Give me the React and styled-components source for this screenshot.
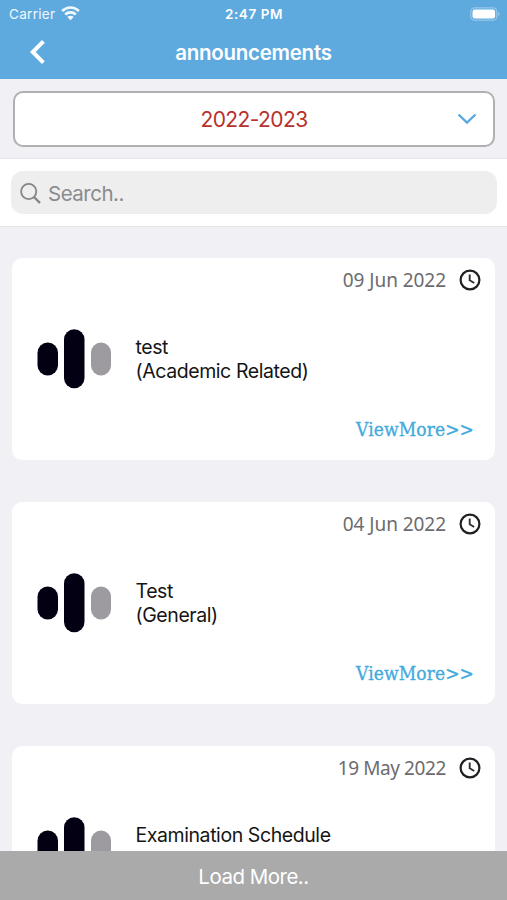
import styled, { createGlobalStyle } from "styled-components";

const colors = {
  blue: "#5eaadf",
  page: "#f0f0f5",
  link: "#42aadd",
  red: "#b7312d",
  ink: "#030014",
  gray: "#9d9b9f",
};

const GlobalStyle = createGlobalStyle`
  * {
    box-sizing: border-box;
  }

  body {
    margin: 0;
    background-color: ${colors.page};
    font-family: Inter, "Liberation Sans", sans-serif;
  }

  button {
    border: none;
    padding: 0;
    background: none;
    font-family: inherit;
  }

  svg {
    display: block;
  }
`;

const Screen = styled.div`
  display: flex;
  flex-direction: column;
  width: 507px;
  height: 900px;
  overflow: hidden;
  background-color: ${colors.page};
`;

const Header = styled.header`
  flex: none;
  height: 79px;
  background-color: ${colors.blue};
  color: white;
`;

const StatusBar = styled.div`
  display: grid;
  grid-template-columns: 1fr auto 1fr;
  align-items: center;
  height: 27px;
  padding: 0 7px 0 9px;
  font-size: 13px;
`;

const Carrier = styled.div`
  display: flex;
  align-items: center;
  gap: 6px;
  opacity: 0.92;
  font-size: 13.5px;
  letter-spacing: 0.3px;
`;

const Time = styled.div`
  font-size: 13.5px;
  font-weight: 600;
  letter-spacing: 0.6px;
  margin-right: 1px;
`;

const BatteryBox = styled.div`
  justify-self: end;
`;

const NavBar = styled.div`
  display: grid;
  grid-template-columns: 60px 1fr 60px;
  align-items: center;
  height: 50px;
`;

const BackBtn = styled.button`
  padding-left: 28px;
  color: white;
`;

const Title = styled.h1`
  margin: 0;
  padding-top: 1px;
  text-align: center;
  font-size: 20.5px;
  font-weight: 600;
  letter-spacing: -0.28px;
`;

const YearBox = styled.div`
  flex: none;
  height: 80px;
  padding: 12px 12px 0 13px;
  border-bottom: 1px solid #e5e5e9;
`;

const YearSelect = styled.button`
  display: grid;
  grid-template-columns: 36px 1fr 36px;
  align-items: center;
  width: 100%;
  height: 56px;
  border: 2px solid #b0b0b2;
  border-radius: 10px;
  background-color: white;
  color: ${colors.red};
  font-size: 21px;
`;

const Year = styled.span`
  grid-column: 2;
  letter-spacing: -0.6px;
`;

const SearchBox = styled.div`
  flex: none;
  height: 68px;
  padding: 12px 10px 0 11px;
  background-color: white;
  border-bottom: 1px solid #e5e5e9;
`;

const SearchField = styled.div`
  display: flex;
  align-items: center;
  gap: 7px;
  height: 43px;
  padding: 1px 0 0 9px;
  border-radius: 12px;
  background-color: #eeeeee;
  color: #8b8b8e;
  font-size: 20.5px;
  letter-spacing: -0.5px;
`;

const List = styled.main`
  flex: 1;
  min-height: 0;
  overflow: hidden;
  display: flex;
  flex-direction: column;
  gap: 42px;
  padding: 30.6px 12px 0;
`;

const Card = styled.article`
  flex: none;
  display: flex;
  flex-direction: column;
  height: 202.1px;
  border-radius: 10px;
  background-color: white;
`;

const DateRow = styled.div`
  display: flex;
  align-items: center;
  justify-content: flex-end;
  gap: 13px;
  height: 44px;
  padding-right: 14px;
  color: #6c6c6e;
  font-family: "Noto Sans", sans-serif;
  font-size: 19px;
  letter-spacing: ${({ $spacing }) => $spacing};
`;

const CardBody = styled.div`
  display: flex;
  align-items: center;
  gap: 23.5px;
  height: 114px;
  padding-left: 25px;
`;

const Message = styled.p`
  margin: 0;
  padding-top: 2px;
  white-space: nowrap;
  color: #151515;
  font-size: 19.5px;
  line-height: 23.3px;
  letter-spacing: -0.42px;
`;

const ViewMore = styled.button`
  align-self: flex-end;
  height: 27.4px;
  margin-right: 21px;
  color: ${colors.link};
  font-family: "DejaVu Serif Condensed", "DejaVu Serif", serif;
  font-size: 19px;
  letter-spacing: 0.1px;
  -webkit-text-stroke: 0.3px ${colors.link};
`;

const LoadMore = styled.button`
  flex: none;
  height: 49px;
  padding-top: 1px;
  background-color: #aaaaaa;
  color: white;
  font-size: 20.5px;
  letter-spacing: -0.5px;
`;

const announcements = [
  {
    date: "09 Jun 2022",
    title: "test",
    type: "Academic Related",
    spacing: "-0.05px",
  },
  {
    date: "04 Jun 2022",
    title: "Test",
    type: "General",
    spacing: "-0.05px",
  },
  {
    date: "19 May 2022",
    title: "Examination Schedule",
    type: "Examination Related",
    spacing: "-0.4px",
  },
];

function WifiIcon() {
  return (
    <svg width="19" height="15" viewBox="0 0 19 15" fill="none">
      <path
        d="M1.1 5C6 .4 13 .4 17.9 5M4.2 8.5c3-2.8 7.6-2.8 10.6 0"
        stroke="white"
        strokeWidth="2.6"
      />
      <path d="M6.3 11c1.9-1.7 4.5-1.7 6.4 0L9.5 14.2z" fill="white" />
    </svg>
  );
}

function BatteryIcon() {
  return (
    <svg width="30" height="14" viewBox="0 0 30 14" fill="none">
      <rect
        x="0.8"
        y="0.8"
        width="26"
        height="12.4"
        rx="3.8"
        stroke="white"
        strokeOpacity="0.35"
        strokeWidth="1.2"
      />
      <rect x="2.5" y="2.5" width="22.6" height="9" rx="2.2" fill="white" />
      <path d="M28.3 4.8c1.6.8 1.6 3.6 0 4.4z" fill="white" opacity="0.45" />
    </svg>
  );
}

function BackIcon() {
  return (
    <svg width="18" height="26" viewBox="0 0 18 26" fill="none">
      <path
        d="M15.4 2.4L4.8 13l10.6 10.6"
        stroke="currentColor"
        strokeWidth="4"
      />
    </svg>
  );
}

function ChevronIcon() {
  return (
    <svg width="20" height="12" viewBox="0 0 20 12" fill="none">
      <path
        d="M1.5 1.5L10 9.7l8.5-8.2"
        stroke="#58a7e0"
        strokeWidth="2.3"
      />
    </svg>
  );
}

function SearchIcon() {
  return (
    <svg width="21" height="21" viewBox="0 0 21 21" fill="none">
      <circle cx="8.7" cy="8.5" r="7.6" stroke="#858588" strokeWidth="1.8" />
      <path d="M14 14l6 6" stroke="#858588" strokeWidth="2.4" />
    </svg>
  );
}

function ClockIcon() {
  return (
    <svg width="22" height="22" viewBox="0 0 22 22" fill="none">
      <circle cx="11" cy="11" r="9.4" stroke="#202020" strokeWidth="2.2" />
      <path d="M10.7 5.5v5.8l4.5 2.7" stroke="#303030" strokeWidth="1.9" />
    </svg>
  );
}

function Logo() {
  return (
    <svg width="75" height="60" viewBox="0 0 75 60">
      <rect x="0.5" y="13.5" width="20.5" height="33" rx="10.25" fill={colors.ink} />
      <rect x="27" y="0.3" width="20.5" height="59" rx="10.25" fill={colors.ink} />
      <rect x="54" y="13.5" width="20" height="33" rx="10" fill={colors.gray} />
    </svg>
  );
}

function Announcement({ date, title, type, spacing }) {
  return (
    <Card>
      <DateRow $spacing={spacing}>
        {date}
        <ClockIcon />
      </DateRow>
      <CardBody>
        <Logo />
        <Message>
          {title}
          <br />({type})
        </Message>
      </CardBody>
      <ViewMore>ViewMore&gt;&gt;</ViewMore>
    </Card>
  );
}

function App() {
  return (
    <Screen>
      <GlobalStyle />
      <Header>
        <StatusBar>
          <Carrier>
            Carrier
            <WifiIcon />
          </Carrier>
          <Time>2:47 PM</Time>
          <BatteryBox>
            <BatteryIcon />
          </BatteryBox>
        </StatusBar>
        <NavBar>
          <BackBtn>
            <BackIcon />
          </BackBtn>
          <Title>announcements</Title>
        </NavBar>
      </Header>
      <YearBox>
        <YearSelect>
          <Year>2022-2023</Year>
          <ChevronIcon />
        </YearSelect>
      </YearBox>
      <SearchBox>
        <SearchField>
          <SearchIcon />
          Search..
        </SearchField>
      </SearchBox>
      <List>
        {announcements.map((item) => (
          <Announcement key={item.date} {...item} />
        ))}
      </List>
      <LoadMore>Load More..</LoadMore>
    </Screen>
  );
}

export default App;
